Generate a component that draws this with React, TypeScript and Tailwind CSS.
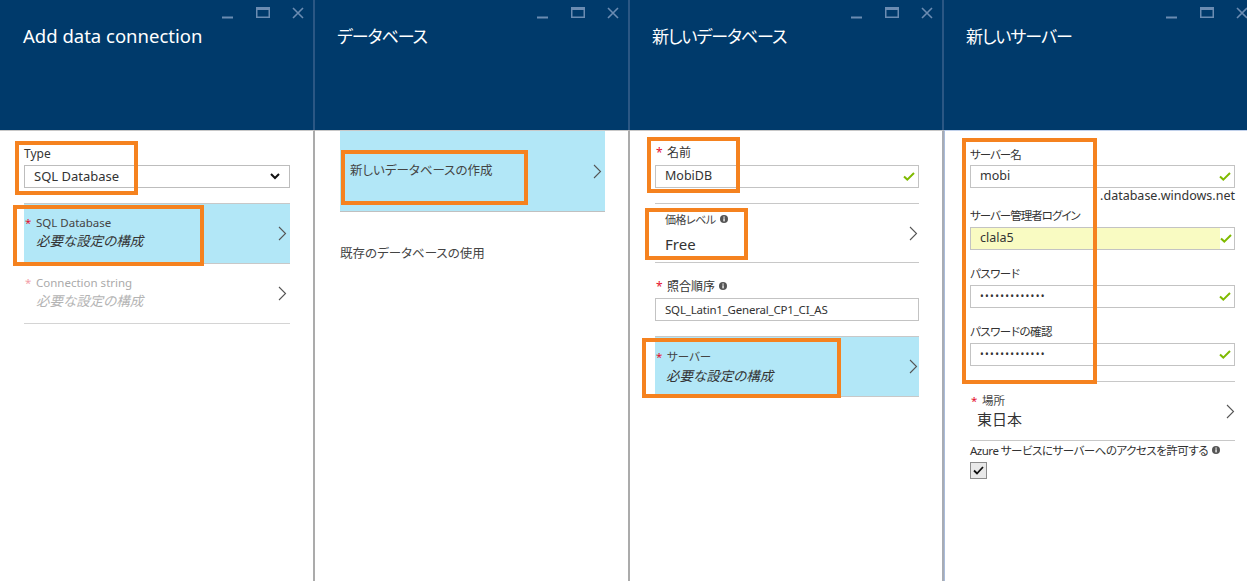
import React from "react";

const ICON = "#6b8cb2";

function Controls() {
  return (
    <div className="flex justify-end items-start pt-[7px] pr-[9px]">
      <svg width="11" height="12" viewBox="0 0 11 12">
        <rect x="0" y="9.5" width="11" height="2" fill={ICON} />
      </svg>
      <svg className="ml-[23px]" width="14" height="11" viewBox="0 0 14 11">
        <rect x="0.75" y="0.75" width="12.5" height="9.5" fill="none" stroke={ICON} strokeWidth="1.5" />
        <rect x="0" y="0" width="14" height="3" fill={ICON} />
      </svg>
      <svg className="ml-[22px]" width="12" height="12" viewBox="0 0 12 12">
        <path d="M1 1L11 11M11 1L1 11" stroke={ICON} strokeWidth="1.6" />
      </svg>
    </div>
  );
}

function Header({ title, jp }: { title: string; jp?: boolean }) {
  return (
    <div className="h-[130px] shrink-0 bg-[#003a6b] border-r-2 border-[#2b5784] flex flex-col">
      <Controls />
      {jp ? (
        <div className="pl-[22px] mt-[4px] text-[17px] leading-[28px] text-white tracking-[-1px]">{title}</div>
      ) : (
        <div className="pl-[23px] mt-[3px] text-[18.5px] leading-[28px] text-white">{title}</div>
      )}
    </div>
  );
}

function Chevron() {
  return (
    <svg width="9" height="15" viewBox="0 0 9 15" className="shrink-0">
      <path d="M1 1L7.5 7.5L1 14" fill="none" stroke="#555" strokeWidth="1.1" />
    </svg>
  );
}

function Check() {
  return (
    <svg width="12" height="9" viewBox="0 0 12 9" className="shrink-0">
      <path d="M1 4.5L4.3 7.6L11 1" fill="none" stroke="#7fba00" strokeWidth="2" />
    </svg>
  );
}

function Info() {
  return (
    <svg width="8" height="8" viewBox="0 0 8 8" className="inline-block ml-[4px] align-[1px]">
      <circle cx="4" cy="4" r="4" fill="#555" />
      <rect x="3.4" y="3.3" width="1.3" height="3.1" fill="#fff" />
      <rect x="3.4" y="1.5" width="1.3" height="1.2" fill="#fff" />
    </svg>
  );
}

function Star({ light }: { light?: boolean }) {
  return (
    <span className={light ? "w-[11px] shrink-0 text-[#f2a0a8]" : "w-[11px] shrink-0 text-[#e5102e]"}>*</span>
  );
}

function Input({ value, dots }: { value: string; dots?: boolean }) {
  return (
    <div className="h-[23px] border border-[#c3c3c3] flex items-center pl-[9px] pr-[3px] bg-white">
      {dots ? (
        <span className="flex-1 text-[10px] tracking-[1.3px] text-[#333]">{value}</span>
      ) : (
        <span className="flex-1 text-[12.5px] text-[#333]">{value}</span>
      )}
      <Check />
    </div>
  );
}

export default function App() {
  return (
    <div className="relative w-[1247px] h-[581px] overflow-hidden flex bg-white text-[#333] font-['Noto_Sans','Noto_Sans_CJK_JP',sans-serif] [font-feature-settings:'palt']">
      {/* Blade 1 */}
      <div className="w-[315px] shrink-0 flex flex-col">
        <Header title="Add data connection" />
        <div className="flex-1 border-t border-[#c8c8c8] border-r-2 border-r-[#ababab] pl-[24px] pr-[23px]">
          <div className="mt-[15px] text-[12px] leading-[16px] text-[#333]">Type</div>
          <div className="mt-[3px] h-[23px] border border-[#bdbdbd] flex items-center pl-[9px] pr-[9px]">
            <span className="flex-1 text-[13px] text-[#333]">SQL Database</span>
            <svg width="10" height="7" viewBox="0 0 10 7">
              <path d="M1 1L5 5L9 1" fill="none" stroke="#111" strokeWidth="2" />
            </svg>
          </div>
          <div className="mt-[15px] h-[61px] border-y border-[#c8c8c8] bg-[#b2e7f7] flex items-center pr-[3px]">
            <div className="flex-1 flex flex-col">
              <div className="flex text-[11.5px] leading-[14px] pl-[1px] text-[#444]">
                <Star />
                <span>SQL Database</span>
              </div>
              <div className="pl-[12px] mt-[1px] text-[13.5px] leading-[20px] italic text-[#333]">必要な設定の構成</div>
            </div>
            <Chevron />
          </div>
          <div className="h-[60px] border-b border-[#d4d4d4] flex items-center pr-[3px]">
            <div className="flex-1 flex flex-col">
              <div className="flex text-[11.5px] leading-[14px] pl-[1px] text-[#aaa]">
                <Star light />
                <span>Connection string</span>
              </div>
              <div className="pl-[12px] mt-[1px] text-[13.5px] leading-[20px] italic text-[#b4b4b4]">必要な設定の構成</div>
            </div>
            <Chevron />
          </div>
        </div>
      </div>

      {/* Blade 2 */}
      <div className="w-[315px] shrink-0 flex flex-col">
        <Header title="データベース" jp />
        <div className="flex-1 border-t border-[#c8c8c8] border-r-2 border-r-[#ababab] pl-[25px] pr-[23px]">
          <div className="h-[81px] border-b border-[#c0c0c0] bg-[#b2e7f7] flex items-center pl-[10px] pr-[3px]">
            <span className="flex-1 text-[12.5px] text-[#444]">新しいデータベースの作成</span>
            <Chevron />
          </div>
          <div className="mt-[32px] text-[12.5px] leading-[20px] text-[#444]">既存のデータベースの使用</div>
        </div>
      </div>

      {/* Blade 3 */}
      <div className="w-[314px] shrink-0 flex flex-col">
        <Header title="新しいデータベース" jp />
        <div className="flex-1 border-t border-[#c8c8c8] border-r-2 border-r-[#a8acb4] pl-[25px] pr-[23px]">
          <div className="mt-[14px] flex text-[12px] leading-[16px] pl-[1px]">
            <Star />
            <span>名前</span>
          </div>
          <div className="mt-[4px]">
            <Input value="MobiDB" />
          </div>
          <div className="mt-[15px] h-[60px] border-y border-[#c8c8c8] flex items-center pr-[1px]">
            <div className="flex-1 flex flex-col gap-[6px] pl-[10px]">
              <div className="text-[11px] leading-[16px] tracking-[-0.5px] text-[#444]">
                価格レベル
                <Info />
              </div>
              <div className="text-[15px] leading-[20px] text-[#333]">Free</div>
            </div>
            <Chevron />
          </div>
          <div className="mt-[16px] flex text-[12px] leading-[16px] pl-[1px]">
            <Star />
            <span>
              照合順序
              <Info />
            </span>
          </div>
          <div className="mt-[3px] h-[23px] border border-[#c3c3c3] flex items-center pl-[9px]">
            <span className="text-[11.5px] tracking-[-0.2px] text-[#333]">SQL_Latin1_General_CP1_CI_AS</span>
          </div>
          <div className="mt-[15px] h-[61px] border-y border-[#c8c8c8] bg-[#b2e7f7] flex items-center pr-[1px]">
            <div className="flex-1 flex flex-col pt-[2px]">
              <div className="flex text-[11.5px] leading-[14px] pl-[1px] text-[#444]">
                <Star />
                <span>サーバー</span>
              </div>
              <div className="pl-[11px] mt-[2px] text-[13.5px] leading-[20px] italic text-[#333]">必要な設定の構成</div>
            </div>
            <Chevron />
          </div>
        </div>
      </div>

      {/* Blade 4 */}
      <div className="w-[315px] shrink-0 flex flex-col">
        <Header title="新しいサーバー" jp />
        <div className="flex-1 border-t border-[#c0d0ea] border-l border-l-[#a9bcdb] pl-[25px] pr-[22px]">
          <div className="w-[265px]">
            <div className="mt-[16px] text-[11.5px] leading-[16px] tracking-[-1px]">サーバー名</div>
            <div className="mt-[2px]">
              <Input value="mobi" />
            </div>
            <div className="text-right whitespace-nowrap text-[12.5px] leading-[16px] text-[#333]">.database.windows.net</div>
            <div className="mt-[4px] text-[11.5px] leading-[16px] tracking-[-1px]">サーバー管理者ログイン</div>
            <div className="mt-[3px] h-[23px] border border-[#c3c3c3] flex items-stretch">
              <div className="flex-1 bg-[#f9fbc2] flex items-center pl-[9px] text-[12.5px] text-[#333]">clala5</div>
              <div className="w-[14px] flex items-center">
                <Check />
              </div>
            </div>
            <div className="mt-[16px] text-[11.5px] leading-[16px] tracking-[-0.5px]">パスワード</div>
            <div className="mt-[3px]">
              <Input value="•••••••••••••" dots />
            </div>
            <div className="mt-[16px] text-[11.5px] leading-[16px] tracking-[-0.5px]">パスワードの確認</div>
            <div className="mt-[3px]">
              <Input value="•••••••••••••" dots />
            </div>
            <div className="mt-[15px] h-[60px] border-y border-[#c8c8c8] flex items-center">
              <div className="flex-1 flex flex-col">
                <div className="flex text-[11.5px] leading-[14px] pl-[1px] text-[#444]">
                  <Star />
                  <span>場所</span>
                </div>
                <div className="pl-[7px] mt-[1px] text-[15px] leading-[20px] text-[#333]">東日本</div>
              </div>
              <Chevron />
            </div>
            <div className="mt-[2px] whitespace-nowrap text-[11.5px] leading-[16px] tracking-[-0.5px] text-[#333]">
              Azure サービスにサーバーへのアクセスを許可する
              <Info />
            </div>
            <div className="mt-[3px] w-[17px] h-[17px] border border-[#8c8c8c] bg-[#e9e9e9] flex items-center justify-center">
              <svg width="11" height="9" viewBox="0 0 11 9">
                <path d="M1 4.5L4 7.5L10 1" fill="none" stroke="#111" strokeWidth="1.8" />
              </svg>
            </div>
          </div>
        </div>
      </div>

      {/* Annotation boxes */}
      <div className="absolute left-[15px] top-[141px] w-[123px] h-[54px] border-4 border-[#f5821f]" />
      <div className="absolute left-[13px] top-[205px] w-[191px] h-[61px] border-4 border-[#f5821f]" />
      <div className="absolute left-[341px] top-[150px] w-[187px] h-[55px] border-4 border-[#f5821f]" />
      <div className="absolute left-[647px] top-[137px] w-[93px] h-[56px] border-4 border-[#f5821f]" />
      <div className="absolute left-[645px] top-[208px] w-[103px] h-[52px] border-4 border-[#f5821f]" />
      <div className="absolute left-[642px] top-[338px] w-[199px] h-[60px] border-4 border-[#f5821f]" />
      <div className="absolute left-[962px] top-[138px] w-[135px] h-[246px] border-4 border-[#f5821f]" />
    </div>
  );
}
